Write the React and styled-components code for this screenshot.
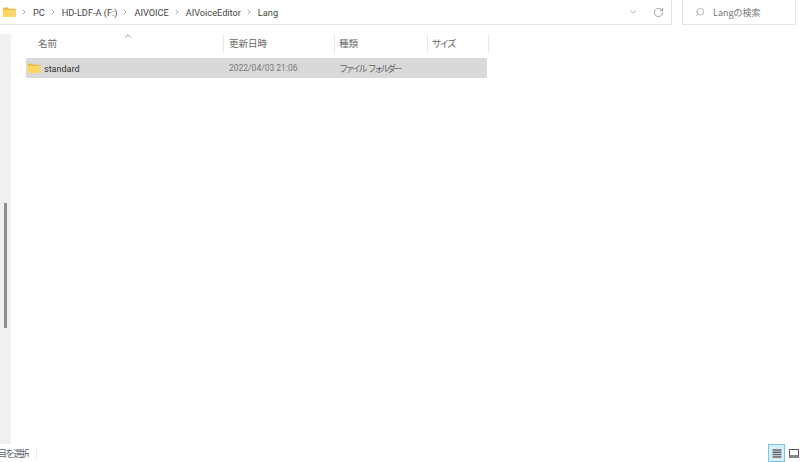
import React from 'react'
import styled, { createGlobalStyle } from 'styled-components'
import { ChevronRight, ChevronDown, ChevronUp, RotateCw, Search } from 'lucide-react'

const Global = createGlobalStyle`
html, body { margin: 0; padding: 0; background: #fff; }
body { font-family: "Noto Sans CJK JP", "Noto Sans", sans-serif; font-size: 10px; color: #333; }
`

const FolderIcon = ({ size = 16 }) => (
    <svg width={size} height={size * 0.8} viewBox="0 0 15 12">
        <path d="M0 1.5 Q0 0.5 1 0.5 H5.5 L7 2 H14 Q15 2 15 3 V11 Q15 12 14 12 H1 Q0 12 0 11 Z" fill="#eebb45" />
        <path d="M0 3.6 H15 V11 Q15 12 14 12 H1 Q0 12 0 11 Z" fill="#fcd768" />
    </svg>
)

const crumbs = ['PC', 'HD-LDF-A (F:)', 'AIVOICE', 'AIVoiceEditor', 'Lang']

export default function App() {
    return (
        <Page>
            <Global />
            <TopBar>
                <AddressBox>
                    <FolderIcon size={13} />
                    {crumbs.map((c) => (
                        <Crumb key={c}>
                            <ChevronRight size={8} strokeWidth={1.6} color="#555" />
                            <span>{c}</span>
                        </Crumb>
                    ))}
                    <AddressTools>
                        <ChevronDown size={10} strokeWidth={1.4} color="#777" />
                        <RotateCw size={11} strokeWidth={1.3} color="#666" />
                    </AddressTools>
                </AddressBox>
                <SearchBox>
                    <Search size={10} strokeWidth={1.2} color="#777" style={{ transform: 'scaleX(-1)' }} />
                    <span>Langの検索</span>
                </SearchBox>
            </TopBar>
            <Main>
                <Side>
                    <Thumb />
                </Side>
                <Content>
                    <HeaderRow>
                        <NameHead>
                            名前
                            <SortArrow><ChevronUp size={10} strokeWidth={1.6} color="#666" /></SortArrow>
                        </NameHead>
                        <DateHead>更新日時</DateHead>
                        <TypeHead>種類</TypeHead>
                        <SizeHead>サイズ</SizeHead>
                    </HeaderRow>
                    <FileRow>
                        <NameCell>
                            <FolderIcon size={13} />
                            <FileName>standard</FileName>
                        </NameCell>
                        <DateCell>2022/04/03 21:06</DateCell>
                        <TypeCell>ファイル フォルダー</TypeCell>
                    </FileRow>
                </Content>
            </Main>
            <StatusBar>
                <StatusClip><span>1 個の項目を選択</span></StatusClip>
                <StatusDivider />
                <ViewButtons>
                    <DetailsBtn>
                        <svg width="10" height="9" viewBox="0 0 10 9">
                            <path d="M0.5 1 H9.5 M0.5 3.3 H9.5 M0.5 5.6 H9.5 M0.5 8 H9.5" stroke="#666" strokeWidth="1.5" />
                        </svg>
                    </DetailsBtn>
                    <TileBtn />
                </ViewButtons>
            </StatusBar>
        </Page>
    )
}

const Page = styled.div`
width: 800px;
height: 462px;
display: flex;
flex-direction: column;
overflow: hidden;
background: #fff;
`
const TopBar = styled.div`
height: 25px;
display: flex;
gap: 10px;
padding-right: 4px;
flex-shrink: 0;
`
const AddressBox = styled.div`
width: 672px;
box-sizing: border-box;
display: flex;
align-items: center;
padding: 0 0 0 3px;
border-right: 1px solid #e4e4e4;
border-bottom: 1px solid #e4e4e4;
`
const Crumb = styled.div`
display: flex;
align-items: center;
gap: 5px;
margin-left: 4px;
font-family: Roboto, "Noto Sans", sans-serif;
font-size: 9.2px;
color: #444;
`
const AddressTools = styled.div`
margin-left: auto;
display: flex;
align-items: center;
gap: 15px;
padding-right: 7px;
`
const SearchBox = styled.div`
flex: 1;
box-sizing: border-box;
display: flex;
align-items: center;
gap: 8px;
padding-left: 12px;
border-left: 1px solid #e4e4e4;
border-right: 1px solid #e4e4e4;
border-bottom: 1px solid #e4e4e4;
font-size: 9px;
color: #777;
`
const Main = styled.div`
flex: 1;
display: flex;
padding-top: 9px;
min-height: 0;
`
const Side = styled.div`
width: 11px;
background: #f0f0f0;
flex-shrink: 0;
padding-top: 169px;
box-sizing: border-box;
`
const Thumb = styled.div`
width: 3px;
height: 125px;
margin-left: 4px;
background: #8e8e8e;
`
const Content = styled.div`
flex: 1;
padding-left: 15px;
`
const HeaderRow = styled.div`
display: flex;
height: 19px;
align-items: center;
font-size: 9.5px;
color: #666;
`
const HeadCell = styled.div`
box-sizing: border-box;
height: 19px;
line-height: 19px;
border-right: 1px solid #e8e8e8;
padding-left: 5px;
`
const NameHead = styled(HeadCell)`
position: relative;
width: 198px;
padding-left: 12px;
`
const SortArrow = styled.span`
position: absolute;
left: 97px;
top: -3px;
line-height: 0;
`
const DateHead = styled(HeadCell)`
width: 111px;
`
const TypeHead = styled(HeadCell)`
width: 93px;
padding-left: 4px;
`
const SizeHead = styled(HeadCell)`
width: 61px;
padding-left: 4px;
letter-spacing: -1.9px;
`
const FileRow = styled.div`
display: flex;
align-items: center;
width: 461px;
height: 20px;
margin-top: 5px;
border-radius: 1px;
background: #d9d9d9;
font-size: 9px;
`
const NameCell = styled.div`
width: 198px;
box-sizing: border-box;
display: flex;
align-items: center;
gap: 3px;
padding-left: 2px;
font-family: Roboto, "Noto Sans", sans-serif;
font-size: 9px;
color: #333;
`
const FileName = styled.span`
padding-top: 1px;
`
const DateCell = styled.div`
width: 111px;
box-sizing: border-box;
padding-left: 5px;
font-family: Roboto, "Noto Sans", sans-serif;
font-size: 8.5px;
color: #777;
`
const TypeCell = styled.div`
padding-left: 4px;
font-size: 9px;
letter-spacing: -2.5px;
word-spacing: 3px;
color: #666;
`
const StatusBar = styled.div`
height: 18px;
flex-shrink: 0;
display: flex;
align-items: center;
`
const StatusClip = styled.div`
width: 29px;
overflow: hidden;
display: flex;
justify-content: flex-end;
white-space: nowrap;
font-size: 9.5px;
letter-spacing: -1.6px;
color: #5a6570;
`
const StatusDivider = styled.div`
width: 1px;
height: 12px;
margin-left: 7px;
background: #eee;
`
const ViewButtons = styled.div`
margin-left: auto;
display: flex;
align-items: center;
gap: 4px;
padding-right: 1px;
`
const DetailsBtn = styled.div`
width: 17px;
height: 18px;
box-sizing: border-box;
display: flex;
align-items: center;
justify-content: center;
border: 1px solid #7cc4ee;
background: #d6eefb;
`
const TileBtn = styled.div`
width: 10px;
height: 9px;
box-sizing: border-box;
border: 1px solid #555;
border-bottom: 3px solid #888;
`
